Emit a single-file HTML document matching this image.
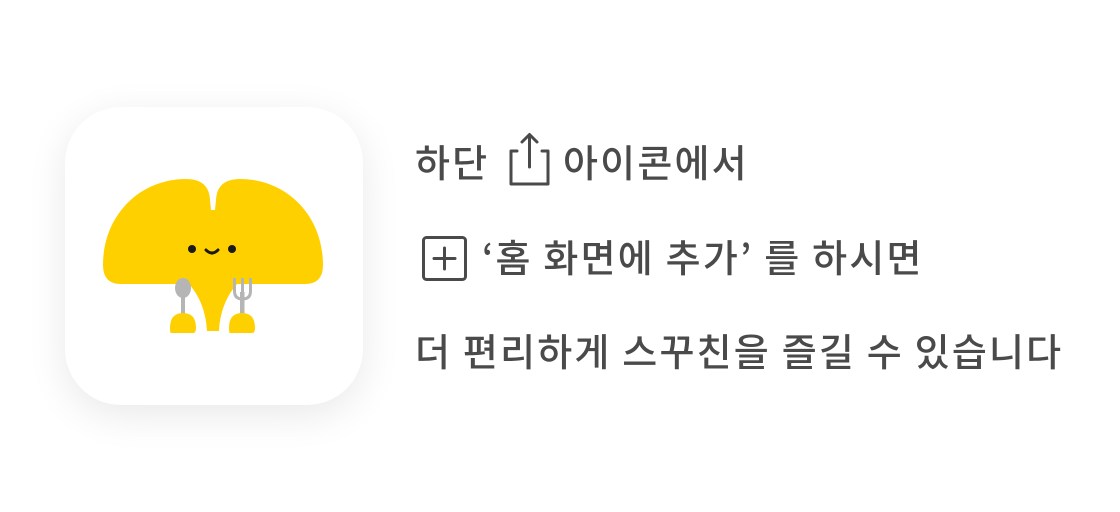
<!DOCTYPE html>
<html><head><meta charset="utf-8"><style>
html,body{margin:0;padding:0;background:#fff;}
body{width:1120px;height:512px;position:relative;overflow:hidden;font-family:"Liberation Sans","Noto Sans CJK KR",sans-serif;}
.card{position:absolute;left:65px;top:107px;width:298px;height:298px;border-radius:56px;background:#fff;box-shadow:0 10px 40px rgba(0,0,0,0.09);}
.t{position:absolute;font-size:38px;line-height:38px;color:#4a4a4a;font-weight:500;white-space:nowrap;letter-spacing:2.2px;font-family:"Noto Sans CJK KR",sans-serif;}
svg{position:absolute;left:0;top:0;}
</style></head><body>
<div class="card"></div>
<svg width="1120" height="512" viewBox="0 0 1120 512">
  <path d="M185 280 C198 292 206 310 207 331 L219 331 C220 310 228 292 241 280 Z" fill="#FFD000"/>
  <path d="M121 284 Q103 284 103 265 C103 215 140 179 186 179 Q209 179 210 200 L211 210 L215 210 L216 200 Q217 179 240 179 C286 179 323 215 323 265 Q323 284 305 284 Z" fill="#FFD000"/>
  <circle cx="192" cy="249" r="4" fill="#1a1a1a"/>
  <circle cx="232" cy="249" r="4" fill="#1a1a1a"/>
  <path d="M206 250 Q212 256 218 250" stroke="#1a1a1a" stroke-width="3" fill="none" stroke-linecap="round"/>
  <rect x="181" y="292" width="4" height="24" fill="#b5b5b5"/>
  <ellipse cx="183" cy="288" rx="8" ry="10" fill="#b5b5b5"/>
  <rect x="240" y="292" width="4.5" height="24" fill="#b5b5b5"/>
  <path d="M234.5 278 L234.5 291 Q234.5 299 242.5 299 Q250.5 299 250.5 291 L250.5 278" stroke="#b5b5b5" stroke-width="3" fill="none"/>
  <path d="M242.5 278 L242.5 294" stroke="#b5b5b5" stroke-width="3"/>
  <path d="M171 333 Q170 333 170 328 Q170 313 183 313 Q196 313 196 328 Q196 333 193 333 Z" fill="#FFD000"/>
  <path d="M230 333 Q229 333 229 328 Q229 313 242 313 Q255 313 255 328 Q255 333 252 333 Z" fill="#FFD000"/>
  <path d="M517 151 L511 151 L511 184 L548 184 L548 151 L542 151" stroke="#4a4a4a" stroke-width="3" fill="none" stroke-linejoin="round" stroke-linecap="round"/>
  <path d="M529.5 167 L529.5 135 M522 142 L529.5 134.5 L537 142" stroke="#4a4a4a" stroke-width="3" fill="none" stroke-linecap="round" stroke-linejoin="round"/>
  <rect x="423.5" y="237.5" width="42" height="42" rx="3" stroke="#4a4a4a" stroke-width="3" fill="none"/>
  <path d="M444.5 248 L444.5 269 M434 258.5 L455 258.5" stroke="#4a4a4a" stroke-width="3" stroke-linecap="round"/>
</svg>
<div class="t" style="left:415px;top:142px;">하단</div>
<div class="t" style="left:563px;top:142px;">아이콘에서</div>
<div class="t" style="left:482px;top:237px;">‘홈 화면에 추가’ 를 하시면</div>
<div class="t" style="left:415px;top:331px;">더 편리하게 스꾸친을 즐길 수 있습니다</div>
</body></html>
